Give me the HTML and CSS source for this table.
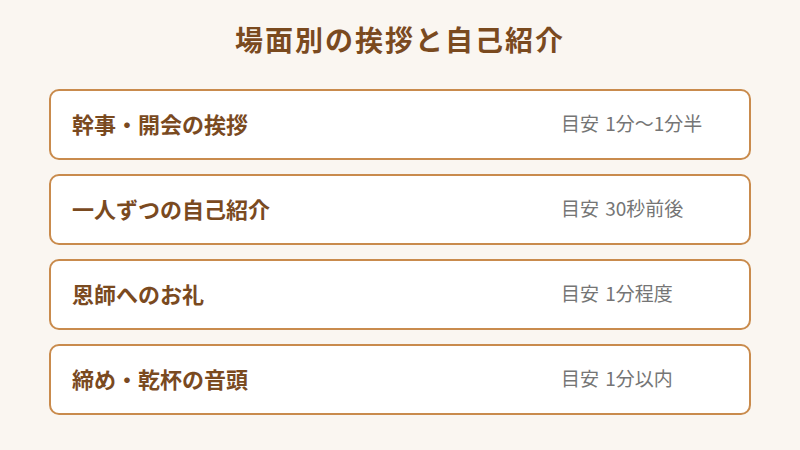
FILE: index.html
```html
<!DOCTYPE html>
<html lang="ja">
<head>
    <meta charset="UTF-8">
    <meta name="viewport" content="width=device-width, initial-scale=1.0">
    <title>場面別の挨拶と自己紹介</title>
    <link rel="stylesheet" href="styles.css">
</head>
<body>
    <div class="container">
        <h1>場面別の挨拶と自己紹介</h1>

        <!-- 場面ごとのカード -->
        <div class="scene-list">
            <div class="scene">
                <span class="scene-name">幹事・開会の挨拶</span>
                <span class="scene-time">目安 1分〜1分半</span>
            </div>
            <div class="scene">
                <span class="scene-name">一人ずつの自己紹介</span>
                <span class="scene-time">目安 30秒前後</span>
            </div>
            <div class="scene">
                <span class="scene-name">恩師へのお礼</span>
                <span class="scene-time">目安 1分程度</span>
            </div>
            <div class="scene">
                <span class="scene-name">締め・乾杯の音頭</span>
                <span class="scene-time">目安 1分以内</span>
            </div>
        </div>
    </div>
</body>
</html>
```

FILE: styles.css
```css
body {
    font-family: "Noto Sans CJK JP", "Noto Sans", sans-serif;
    margin: 0;
    background-color: #faf6f1;
}

.container {
    padding: 22px 49px 0 49px;
}

h1 {
    margin: 0 0 33px;
    font-size: 28px;
    line-height: 34px;
    font-weight: bold;
    letter-spacing: 2px;
    text-align: center;
    color: #7a4a1f;
}

.scene-list {
    display: flex;
    flex-direction: column;
    gap: 14px;
}

.scene {
    display: flex;
    align-items: center;
    justify-content: space-between;
    height: 71px;
    padding: 0 20px 4px 21px;
    background: white;
    border: 2px solid #c98b4d;
    border-radius: 10px;
    box-sizing: border-box;
}

.scene-name {
    font-size: 22px;
    line-height: 1;
    font-weight: bold;
    color: #7a4a1f;
}

.scene-time {
    width: 168px;
    font-size: 19px;
    line-height: 1;
    word-spacing: 2px;
    color: #757575;
}
```
